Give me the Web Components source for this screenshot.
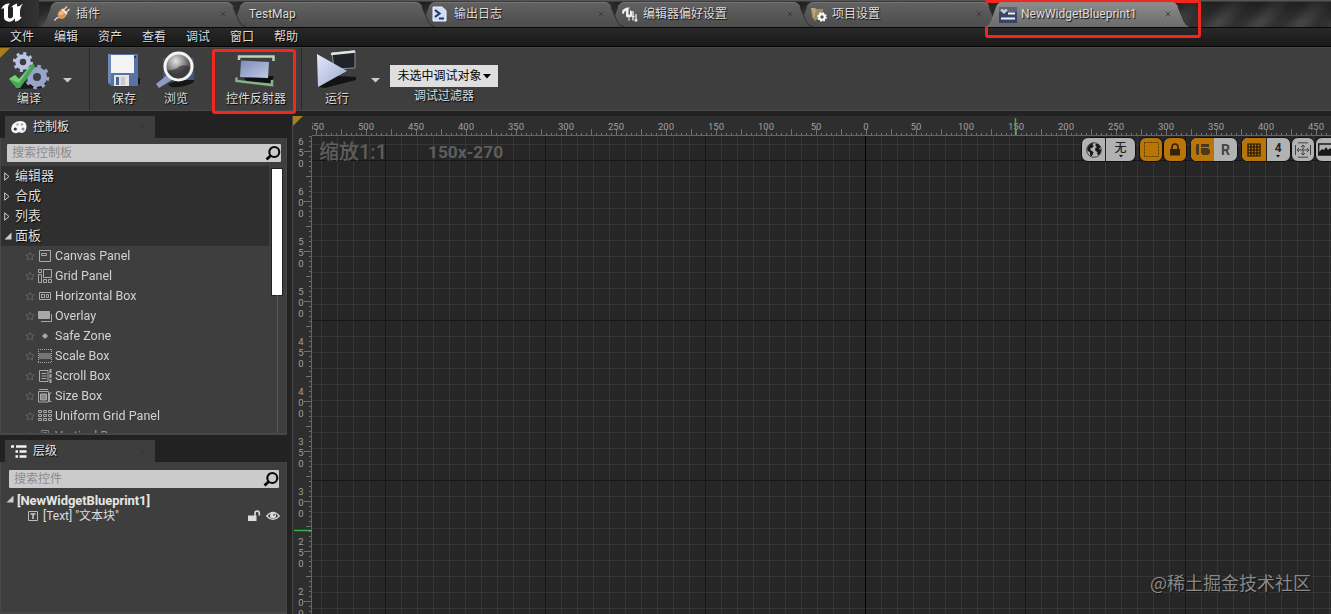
<!DOCTYPE html>
<html lang="zh">
<head>
<meta charset="utf-8">
<title>NewWidgetBlueprint1</title>
<style>
  body {
    margin: 0;
    width: 1331px;
    height: 614px;
    overflow: hidden;
    background: #222;
    color: #dcdcdc;
    font: 12px/16px Roboto, "Noto Sans CJK SC", sans-serif;
  }
</style>
</head>
<body>
<editor-window></editor-window>

<script>
const ICONS = {
  logo: `<svg width="24" height="23" viewBox="0 0 24 22"><path d="M1 9C3 4 6 3 10 3C8 5 8 6 8 9V16Q8 18 10 18Q12 18 13 16V7Q12 6 11 7Q13 4 17 3V6Q20 6 23 3Q20 7 20 10V15Q20 18 22 16C20 20 17 21 15 21V18C13 20 11 22 8 21C4 20 4 18 4 15V8Q3 7 1 9Z" fill="#fff"/></svg>`,
  plug: `<svg width="16" height="16" viewBox="0 0 16 16"><path d="M.5 14.500Q3 11 5 11.500" stroke="#ddd" stroke-width="1.300" fill="none"/><path d="M3.500 8Q4 5 7 3.500L12.500 9Q11 12.500 8 13Q4 13 3.500 8Z" fill="#dc9653"/><path d="M5 8Q5 6 8 5L10 7Q7 11 5 8Z" fill="#f0be8a"/><path d="M7 3.500L9 2.500L13.500 7L12.500 9Z" fill="#fbecd9"/><path d="M10 3.500L13 .5M12.500 6L15.500 3" stroke="#e2c8ae" stroke-width="1.600"/></svg>`,
  log: `<svg width="15" height="16" viewBox="0 0 15 16"><path d="M1 1H10L14 4.500V15H1Z" fill="#cfdcf5" stroke="#eef4ff"/><path d="M3 4L7.500 7.500L3 11" fill="none" stroke="#26366b" stroke-width="2.200"/><path d="M7 12.500H12" stroke="#26366b" stroke-width="2"/></svg>`,
  prefs: `<svg width="17" height="17" viewBox="0 0 17 17"><path d="M1 6Q2 1 9 1.500Q7 2.500 7.500 5V8.500Q8.500 9 9 8V4L11 5.500V10Q8 13 5 10.500V5Q3 5 3 8Q1 8 1 6Z" fill="#eee"/><path d="M12 5V14.500M15 8V16M8 12.500V14.500" stroke="#eee" stroke-width="1.300"/><path d="M10.500 10.500H13.500M13.500 14H16.500" stroke="#eee" stroke-width="1.700"/></svg>`,
  project: `<svg width="17" height="17" viewBox="0 0 17 17"><path d="M1 2H5L6 3H13V7L5 15L2 11Z" fill="#a08a66"/><path d="M1 2H5L6 4L4 12Z" fill="#bba681"/><circle cx="12" cy="11" r="2.700" fill="none" stroke="#fff" stroke-width="2"/><circle cx="12" cy="11" r="4" fill="none" stroke="#fff" stroke-width="1.600" stroke-dasharray="1.700 1.440"/></svg>`,
  widget: `<svg width="18" height="17" viewBox="0 0 18 17"><path d="M0 1H18V17H0Z" fill="#36436b"/><path d="M0 1H18V6H0Z" fill="#5c6374"/><path d="M5 8L1.500 4.500Q2 2 5 4Q8 2 8.500 4.500Z" fill="#ccc"/><path d="M9 7.500H16M2 12.500H16" stroke="#f2f2f2" stroke-width="2.200"/></svg>`,
  compile: `<svg width="42" height="40" viewBox="0 0 42 40"><path d="M5 36L13 31L38 33L34 38L12 39Z" fill="#191919"/><g fill="none" stroke="#b9c5e3"><circle cx="15" cy="12" r="5.500" stroke-width="4.500"/><circle cx="15" cy="12" r="8.600" stroke-width="3" stroke-dasharray="3 3.750"/><circle cx="29" cy="27" r="7" stroke="#98a5c9" stroke-width="6"/><circle cx="29" cy="27" r="10.800" stroke="#98a5c9" stroke-width="3" stroke-dasharray="3.600 4.880"/></g><path d="M1 29L7 25L11 29L25 13L27 17L12 38H8Z" fill="#48a457"/><path d="M1 29L7 25L11 29L25 13L11 33Z" fill="#72d07d"/></svg>`,
  save: `<svg width="36" height="38" viewBox="0 0 36 38"><path d="M4 33L34 27V33Q27 36 18 35Z" fill="#171717"/><path d="M2 3H32V35H5L2 32Z" fill="#5673a6"/><path d="M2 3H5V32H2Z" fill="#7189b5"/><path d="M5 4H28V22H5Z" fill="#f3f3f3"/><path d="M8 24H23V35H8Z" fill="#e4e4e4"/><path d="M10 26H13V34H10Z" fill="#4a6596"/><path d="M15 26H19V34H15Z" fill="#c8c8c8"/><path d="M28 5H30V7H28Z" fill="#26385c"/></svg>`,
  browse: `<svg width="42" height="40" viewBox="0 0 42 40"><defs><radialGradient id="g" cx=".4" cy=".3"><stop offset="0" stop-color="#e4e4e4"/><stop offset=".65" stop-color="#8a8a8a"/><stop offset="1" stop-color="#555"/></radialGradient></defs><path d="M13 34L39 26V32Q30 38 16 37Z" fill="#151515"/><path d="M8 8H39V30H8Z" fill="#42567c"/><path d="M12 25L1 34L4 38L17 30Z" fill="#8e9bc4"/><circle cx="23.500" cy="16.500" r="13.500" fill="url(#g)" stroke="#f4f4f4" stroke-width="3"/><path d="M12 20Q20 21 25 16Q30 14 35 17Q33 28 23 28.500Q14 27 12 20Z" fill="#2c2c2c" opacity=".6"/></svg>`,
  reflector: `<svg width="42" height="38" viewBox="0 0 42 38"><defs><linearGradient id="g" x2="1" y2="1"><stop stop-color="#7d8cb8"/><stop offset="1" stop-color="#bfcbe8"/></linearGradient></defs><path d="M9 27L39 25L36 32L12 31Z" fill="#101010"/><path d="M6 9.500L34 11L33 27L5 26Z" fill="url(#g)"/><path d="M4 9V5.500H38.500V10" fill="none" stroke="#b9d6b6" stroke-width="2.500"/><path d="M1.500 26.500V30L37 34V29" fill="none" stroke="#86b384" stroke-width="2.500"/></svg>`,
  play: `<svg width="44" height="42" viewBox="0 0 44 42"><defs><linearGradient id="g" x2="1" y2="1"><stop stop-color="#e4eafa"/><stop offset="1" stop-color="#9aa8cf"/></linearGradient></defs><path d="M4 38L22 27L41 28V31L10 39Z" fill="#131313"/><path d="M17 4L40 2V19L19 20Z" fill="#202329" stroke="#8b919b"/><path d="M16 5L40 2.500" stroke="#dfe8e2" stroke-width="2.500"/><path d="M2 5L32 22L3 38Z" fill="url(#g)"/></svg>`,
  caret: `<svg width="9" height="6" viewBox="0 0 9 6"><path d="M0 1H9L4.500 5.500Z" fill="#ccc"/></svg>`,
  palette: `<svg width="16" height="15" viewBox="0 0 16 15"><path d="M9 1Q15 1 15.500 6Q15.500 12 11 13Q8 12 7 12.500Q4 14.500 1 11.500Q-1 8 2 4Q5 1 9 1Z" fill="#f6f6f6"/><circle cx="4.300" cy="9" r="1.600" fill="#333"/><circle cx="6.500" cy="4.500" r="1.200" fill="#a5b0a0"/><circle cx="11" cy="4.500" r="1.200" fill="#9aabc0"/><circle cx="12" cy="9" r="1.500" fill="#7d94b8"/></svg>`,
  tree: `<svg width="16" height="13" viewBox="0 0 16 13"><path d="M0 1.500H3M5 1.500H15.500M8.500 6.500H15.500M8.500 11.500H15.500M4.500 6.500H7M4.500 11.500H7" stroke="#f2f2f2" stroke-width="2.500"/></svg>`,
  search: `<svg width="16" height="16" viewBox="0 0 16 16"><circle cx="9.300" cy="7" r="5" fill="none" stroke="#080808" stroke-width="2.100"/><path d="M5.800 10.500L1.500 14.500" stroke="#080808" stroke-width="2.800"/></svg>`,
  star: `<svg width="10" height="10" viewBox="0 0 10 10"><path d="M5 1L6.200 3.800L9.300 4L7 6L7.700 9L5 7.500L2.300 9L3 6L.7 4L3.800 3.800Z" fill="none" stroke="#646464" stroke-width=".9"/></svg>`,
  canvas: `<svg width="14" height="14" viewBox="0 0 14 14"><path d="M1.500 1.500H12.500V12.500H1.500ZM3.500 4.500H8.500V6.500H3.500Z"/></svg>`,
  grid: `<svg width="14" height="14" viewBox="0 0 14 14"><path d="M.5.500H3.500V3.500H.5ZM5.500.500H13.500V8.500H5.500ZM.5 5.500H3.500V13.500H.5ZM5.500 10.500H8.500V13.500H5.500ZM10.500 10.500H13.500V13.500H10.500Z"/></svg>`,
  hbox: `<svg width="14" height="14" viewBox="0 0 14 14"><path d="M1.500 3.500H12.500V10.500H1.500ZM3.500 5.500H6.500V8.500H3.500ZM8.500 5.500H10.500V8.500H8.500Z"/></svg>`,
  overlay: `<svg width="14" height="14" viewBox="0 0 14 14"><path d="M.5 2.500H11.500V9.500H.5Z" fill="#a8a8a8"/><path d="M13.500 5V12.500H3"/></svg>`,
  safe: `<svg width="14" height="14" viewBox="0 0 14 14"><path d="M7 4.500L9.500 7L7 9.500L4.500 7Z" fill="#aaa"/></svg>`,
  scale: `<svg width="14" height="14" viewBox="0 0 14 14"><path d="M0 .5H14M0 13.500H14M.5 0V14M13.500 0V14" stroke-dasharray="1 1"/><path d="M1 4H13V10H1Z" fill="#757575" stroke="none"/></svg>`,
  scroll: `<svg width="14" height="14" viewBox="0 0 14 14"><path d="M1.500 1.500H10V12.500H1.500ZM3.500 4.500H8.500M3.500 7H8.500M3.500 9.500H8.500"/><path d="M12.500 0V4M12.500 5V9M12.500 10V14" stroke-width="2"/></svg>`,
  size: `<svg width="14" height="14" viewBox="0 0 14 14"><path d="M1 .5H10M.5 2.500H10.500V13H.5ZM13.500 4H11.500V12.500H13.500"/><path d="M2.500 5H8.500V11H2.500Z" fill="#888"/></svg>`,
  uniform: `<svg width="14" height="14" viewBox="0 0 14 14"><path d="M.5 1.500H3.500V3.500H.5ZM5.500 1.500H8.500V3.500H5.500ZM10.500 1.500H13.500V3.500H10.500ZM.5 5.500H3.500V7.500H.5ZM5.500 5.500H8.500V7.500H5.500ZM10.500 5.500H13.500V7.500H10.500ZM.5 9.500H3.500V11.500H.5ZM5.500 9.500H8.500V11.500H5.500ZM10.500 9.500H13.500V11.500H10.500Z"/></svg>`,
  vbox: `<svg width="14" height="14" viewBox="0 0 14 14"><path d="M3.500 1.500H10.500V13.500H3.500ZM5.500 3.500H8.500V6.500H5.500Z"/></svg>`,
  text: `<svg width="10" height="10" viewBox="0 0 10 10"><path d="M.5.500H9.500V9.500H.5Z" fill="none" stroke="#bbb"/><path d="M2.500 3H7.500M5 3V8" fill="none" stroke="#ccc" stroke-width="1.500"/></svg>`,
  closed: `<svg width="6" height="9" viewBox="0 0 6 9"><path d="M.7.800V8.200L5 4.500Z" fill="none" stroke="#ccc"/></svg>`,
  open: `<svg width="8" height="8" viewBox="0 0 8 8"><path d="M7.500.500V7.500H.5Z" fill="#ccc"/></svg>`,
  unlock: `<svg width="13" height="12" viewBox="0 0 13 12"><path d="M0 5.500H8.500V11H0Z" fill="#ddd"/><path d="M7 6V3.500Q7 1 9.200 1Q11.300 1 11.300 3.500V5.500" fill="none" stroke="#ddd" stroke-width="1.600"/></svg>`,
  eye: `<svg width="14" height="10" viewBox="0 0 14 10"><path d="M.7 5Q7-2.500 13.300 5Q7 12 .7 5Z" fill="none" stroke="#ddd" stroke-width="1.200"/><circle cx="7" cy="4.600" r="3" fill="#ddd"/><circle cx="8" cy="3.700" r="1" fill="#666"/></svg>`,
  globe: `<svg width="16" height="16" viewBox="0 0 16 16"><circle cx="8" cy="8" r="7.300" fill="#b4b4b4" stroke="#333" stroke-width=".9"/><path d="M1 7L2.500 4L5 1.500L7.500 1L6.500 3L8 4L6 6L4 6.500L5 8.500L7.500 10L7 12L5.500 14.500L4 13L4 10.500L2 9ZM9.500 2L12 2L14.500 5L13 6.500L15 8L14.500 11L12.500 13L11 12L11.500 10L9.500 9L9 6.500L11 5L9.500 4Z" fill="#191919"/></svg>`,
  dashed: `<svg width="17" height="16" viewBox="0 0 17 16"><path d="M1.500.500H15.500V14.500H1.500Z" fill="none" stroke="#5f3f06" stroke-dasharray="2 1"/></svg>`,
  lock: `<svg width="12" height="14" viewBox="0 0 12 14"><path d="M1 6H11V12.500H1Z" fill="#342309"/><path d="M3 6V4Q3 1 6 1Q9 1 9 4V6" fill="none" stroke="#342309" stroke-width="1.600"/></svg>`,
  layout: `<svg width="16" height="14" viewBox="0 0 16 14"><path d="M1 2L2 1H4V12H2L1 10ZM6 1H14V4H6ZM6 5H13L15 7V10L13 12H8L6 10Z" fill="#4a391c"/></svg>`,
  snap: `<svg width="14" height="14" viewBox="0 0 14 14"><path d="M1 1H13V13H1ZM4 1V13M7 1V13M10 1V13M1 4H13M1 7H13M1 10H13" fill="none" stroke="#181000" stroke-width="1.200"/></svg>`,
  fit: `<svg width="18" height="16" viewBox="0 0 18 16"><path d="M1.500 3V13M16.500 3V13M4 .8H14M4 15.200H14M3 8H15M9 3V13M5 6L3 8L5 10M13 6L15 8L13 10M7 5L9 3L11 5M7 11L9 13L11 11" fill="none" stroke="#444"/></svg>`,
  image: `<svg width="16" height="14" viewBox="0 0 16 14"><path d="M.7 1H15.300V12H.7Z" fill="none" stroke="#181818" stroke-width="1.300"/><path d="M1 11V9L4 6L6 7L8 4L10 7L12 5L15 9V12H1Z" fill="#181818"/></svg>`
};

const X = `<svg width="6" height="6" viewBox="0 0 6 6"><path d="M.5.500L5.500 5.500M5.500.500L.5 5.500" stroke="#353535" stroke-opacity=".8"/></svg>`;

class BaseElement extends HTMLElement {
  constructor() {
    super();
    this.attachShadow({ mode: 'open' });
  }
  connectedCallback() {
    const template = document.createElement('template');
    template.innerHTML = `<style>${this.getStyles()}</style>${this.getTemplate()}`;
    this.shadowRoot.replaceChildren(template.content.cloneNode(true));
  }
  icon() {
    return ICONS[this.getAttribute('icon')] || '';
  }
}

class UiIcon extends BaseElement {
  getStyles() {
    return `:host { display: inline-flex; flex: none; } svg { display: block; }`;
  }
  getTemplate() {
    return ICONS[this.getAttribute('name')] || '';
  }
}

class WindowTab extends BaseElement {
  getStyles() {
    return `
      :host {
        display: grid;
        flex: none;
        width: 207px;
        height: 27px;
        margin-right: -18px;
      }
      .shape, .content { grid-area: 1 / 1; }
      .content {
        display: flex;
        align-items: center;
        padding: 1px 20px 0 15px;
        text-shadow: 1px 1px 1px #111;
        white-space: nowrap;
      }
      .icon { display: flex; width: 22px; }
      :host(:not([icon])) .icon { width: 6px; }
      .label { flex: 1; }
    `;
  }
  getTemplate() {
    const top = this.hasAttribute('active') ? '#8d8d8d' : '#626262';
    const bottom = this.hasAttribute('active') ? '#6b6b6b' : '#4c4c4c';
    const close = this.hasAttribute('closable') ? X : '';
    return `
      <svg class="shape" width="207" height="27">
        <defs><linearGradient id="t" x2="0" y2="1"><stop stop-color="${top}"/><stop offset="1" stop-color="${bottom}"/></linearGradient></defs>
        <path d="M0 27Q5 26 7 21L12 7Q14 2 19 2H187Q192 2 194 7L200 21Q202 26 207 27Z" fill="url(#t)"/>
        <path d="M12 7Q14 2.500 19 2.500H187Q192 2.500 194 7" fill="none" stroke="#858585" stroke-opacity=".5"/>
        <path d="M194 7L200 21Q202 26 207 27" fill="none" stroke="#2f2f2f"/>
      </svg>
      <div class="content">
        <span class="icon">${this.icon()}</span>
        <span class="label"><slot></slot></span>${close}
      </div>`;
  }
}

class MenuBar extends BaseElement {
  getStyles() {
    return `
      :host {
        display: flex;
        height: 18px;
        border-top: 1px solid #080808;
        border-bottom: 1px solid #050505;
        background: linear-gradient(#282828, #191919);
        line-height: 19px;
      }
      ::slotted(span) { width: 44px; text-align: center; text-shadow: 1px 1px #000; }
    `;
  }
  getTemplate() {
    return `<slot></slot>`;
  }
}

class ToolButton extends BaseElement {
  getStyles() {
    return `
      :host {
        display: flex;
        flex-direction: column;
        align-items: center;
        flex: none;
        height: 61px;
      }
      .icon { height: 42px; display: flex; align-items: center; }
      .label { line-height: 16px; white-space: nowrap; text-shadow: 1px 1px 1px #000; }
    `;
  }
  getTemplate() {
    return `<div class="icon">${this.icon()}</div><div class="label"><slot></slot></div>`;
  }
}

class SearchBox extends BaseElement {
  getStyles() {
    return `
      :host {
        display: flex;
        align-items: center;
        justify-content: space-between;
        box-sizing: border-box;
        height: 18px;
        padding: 0 0 0 5px;
        background: #cbcbcb;
        border-radius: 1px;
        color: #8b8b8b;
      }
      svg { display: block; }
    `;
  }
  getTemplate() {
    return `<slot></slot>${ICONS.search}`;
  }
}

class DockPanel extends BaseElement {
  getStyles() {
    return `
      :host { display: flex; flex-direction: column; box-sizing: border-box; width: 287px; }
      header {
        display: flex;
        align-items: center;
        box-sizing: border-box;
        width: 150px;
        height: 22px;
        margin-left: 5px;
        padding: 0 10px 0 6px;
        background: #3e3e3e;
        color: #e4e4e4;
      }
      .icon { display: flex; width: 22px; }
      .label { flex: 1; text-shadow: 1px 1px 1px #000; }
      .body {
        flex: 1;
        min-height: 0;
        overflow: hidden;
        box-sizing: border-box;
        background: #3e3e3e;
        border: solid #474747;
        border-width: 0 1px 2px 1px;
      }
    `;
  }
  getTemplate() {
    return `
      <header><span class="icon">${this.icon()}</span><span class="label">${this.getAttribute('label')}</span>${X}</header>
      <div class="body"><slot></slot></div>`;
  }
}

class PaletteCategory extends BaseElement {
  getStyles() {
    return `
      :host { display: block; }
      .head {
        display: flex;
        align-items: center;
        height: 20px;
        padding-left: 3px;
        background: #2f2f2f;
        font-size: 13px;
        text-shadow: 1px 1px 1px #000;
      }
      .arrow { display: flex; width: 11px; }
    `;
  }
  getTemplate() {
    const arrow = this.hasAttribute('open') ? ICONS.open : ICONS.closed;
    return `
      <div class="head"><span class="arrow">${arrow}</span>${this.getAttribute('label')}</div>
      <slot></slot>`;
  }
}

class PaletteItem extends BaseElement {
  getStyles() {
    return `
      :host { display: flex; align-items: center; height: 20px; padding-left: 24px; font-size: 12.5px; color: #d2d2d2; }
      .icon { display: flex; width: 17px; margin-left: 3px; fill: none; stroke: #a9a9a9; }
      svg { display: block; }
      .label { white-space: nowrap; }
    `;
  }
  getTemplate() {
    return `${ICONS.star}<span class="icon">${this.icon()}</span><span class="label"><slot></slot></span>`;
  }
}

class PaletteList extends BaseElement {
  getStyles() {
    return `
      :host { display: flex; height: 268px; margin-top: 3px; overflow: hidden; }
      .items { width: 268px; height: 267px; padding-top: 1px; overflow: hidden; -webkit-mask-image: linear-gradient(#000 257px, #0008 268px); }
      .bar { width: 10px; margin-left: 3px; padding-top: 4px; display: flex; flex-direction: column; align-items: center; }
      .thumb { width: 10px; height: 126px; flex: none; background: #fff; outline: 1px solid #222; }
      .track { width: 1px; flex: 1; background: #585858; }
    `;
  }
  getTemplate() {
    return `
      <div class="items"><slot></slot></div>
      <div class="bar"><div class="thumb"></div><div class="track"></div></div>`;
  }
}

class HierarchyTree extends BaseElement {
  getStyles() {
    return `
      :host { display: block; margin-top: 5px; }
      div { display: flex; align-items: center; height: 16px; white-space: nowrap; }
      .root { height: 15px; padding-left: 5px; font-size: 13px; font-weight: bold; letter-spacing: -.08px; color: #e6e6e6; gap: 3px; }
      .root svg { margin-top: -3px; }
      .child { padding: 0 6px 0 27px; gap: 5px; }
      .name { flex: 1; }
    `;
  }
  getTemplate() {
    return `
      <div class="root">${ICONS.open}<span>[NewWidgetBlueprint1]</span></div>
      <div class="child">${ICONS.text}<span class="name">[Text] "文本块"</span>${ICONS.unlock}${ICONS.eye}</div>`;
  }
}

class RulerBar extends BaseElement {
  getStyles() {
    return `
      :host { display: grid; overflow: hidden; background: #2e2e2e; color: #a0a0a0; font-size: 9.5px; line-height: 11px; }
      svg, .labels { grid-area: 1 / 1; }
      .labels { display: flex; }
      .labels span { flex: none; width: 50px; text-align: center; }
      :host(:not([vertical])) .labels { margin-left: -21px; padding-top: 5px; }
      :host([vertical]) .labels { flex-direction: column; align-items: flex-start; margin-top: -9px; padding-left: 5px; }
      :host([vertical]) span { display: flex; flex-direction: column; justify-content: center; width: 6px; height: 50px; }
      b { font-weight: normal; }
    `;
  }
  getTemplate() {
    const vertical = this.hasAttribute('vertical');
    const origin = vertical ? 801 - 136 : 866 - 312;
    const length = vertical ? 478 : 1019;
    let d = '';
    for (let v = -1000; v <= 1000; v += 5) {
      const p = origin + v + .5;
      if (p < 0 || p > length) continue;
      const size = v % 50 === 0 ? (vertical ? 7 : 6) : v % 25 === 0 ? (vertical ? 5 : 6) : 2;
      d += vertical ? `M${18 - size} ${p}H18` : `M${p} ${19 - size}V19`;
    }
    const labels = [];
    const last = vertical ? 200 : -450;
    for (let v = vertical ? 650 : 550; v >= last; v -= 50) {
      const text = String(Math.abs(v));
      labels.push(`<span>${vertical ? [...text].map(c => `<b>${c}</b>`).join('') : text}</span>`);
    }
    const marker = vertical ? 'M1 394.500H19' : 'M703.500 2V19';
    const edge = vertical ? 'M18.500 0V478' : 'M0 19.500H1019';
    const w = vertical ? 19 : 1019;
    const h = vertical ? 478 : 20;
    return `
      <svg width="${w}" height="${h}"><path d="${d}" stroke="#707070"/><path d="${edge}" stroke="#646464"/></svg>
      <div class="labels">${labels.join('')}</div>
      <svg width="${w}" height="${h}"><path d="${marker}" stroke="#3cb64b" stroke-width="1.400"/></svg>`;
  }
}

class ViewButton extends BaseElement {
  getStyles() {
    return `
      :host {
        display: flex;
        flex: none;
        height: 23px;
        background: #b2b2b2;
        border: 1px solid #111;
        border-radius: 7px;
        overflow: hidden;
        color: #222;
      }
      :host([on]) { background: #ba7508; }
      ::slotted(span) { display: flex; flex-direction: column; align-items: center; justify-content: center; flex: 1; font-weight: bold; }
      ::slotted(span.on) { background: #ba7508; }
      ::slotted(span.line) { border-left: 1px solid #222; }
    `;
  }
  getTemplate() {
    return `<slot></slot>`;
  }
}

class WidgetDesigner extends BaseElement {
  getStyles() {
    return `
      :host {
        display: grid;
        grid-template: 20px 1fr / 19px 1fr;
        flex: 1;
        min-width: 0;
        overflow: hidden;
        border-left: 1px solid #484848;
        box-sizing: border-box;
        background: #2e2e2e;
      }
      .corner { background: linear-gradient(135deg, #a87f1c 6.5px, #2e2e2e 7.5px); }
      .surface {
        position: relative;
        overflow: hidden;
        background: #262626;
        display: flex;
        justify-content: space-between;
        align-items: flex-start;
      }
      .surface > svg { position: absolute; inset: 0; }
      .info {
        position: relative;
        display: flex;
        gap: 41px;
        padding: 3px 0 0 7px;
        font-size: 17.3px;
        line-height: 26px;
        font-weight: bold;
        color: #5e5e5e;
      }
      .info .zoom { font-size: 20px; font-weight: 500; }
      .tools { position: relative; display: flex; margin-right: -13px; padding-top: 1px; }
      small { font-size: 12px; line-height: 14px; }
      .thin { font-weight: 500; }
      .r { font-size: 14px; color: #444; }
      .mark {
        position: absolute;
        right: 20px;
        bottom: 18px;
        color: #898989;
        font: 18px/27px "Noto Sans CJK SC", sans-serif;
        text-shadow: 1px 1px 1px #111;
      }
    `;
  }
  getTemplate() {
    let minor = '', major = '';
    for (let x = 9; x < 1019; x += 16) {
      if ((x - 553) % 160 === 0) major += `M${x + .5} 0V478`;
      else minor += `M${x + .5} 0V478`;
    }
    for (let y = 8; y < 478; y += 16) {
      if ((y - 24) % 160 === 0) major += `M0 ${y + .5}H1019`;
      else minor += `M0 ${y + .5}H1019`;
    }
    const drop = `<svg width="4" height="3"><path d="M0 0H4L2 2.500Z" fill="#111"/></svg>`;
    return `
      <div class="corner"></div>
      <ruler-bar></ruler-bar>
      <ruler-bar vertical></ruler-bar>
      <div class="surface">
        <svg width="1019" height="478"><path d="${minor}" stroke="#363636"/><path d="${major}" stroke="#161616"/><path d="M553.500 0V478" stroke="#050505"/></svg>
        <div class="info"><span class="zoom">缩放1:1</span><span>150x-270</span></div>
        <div class="tools">
          <view-button style="width:53px;margin-right:3px"><span><ui-icon name="globe"></ui-icon></span><span class="line" style="flex:1.25"><small class="thin">无</small>${drop}</span></view-button>
          <view-button on style="width:22px"><span><ui-icon name="dashed"></ui-icon></span></view-button>
          <view-button on style="width:22px;margin-right:3px"><span><ui-icon name="lock"></ui-icon></span></view-button>
          <view-button style="width:46px;margin-right:3px"><span class="on"><ui-icon name="layout"></ui-icon></span><span class="r">R</span></view-button>
          <view-button style="width:48px"><span class="on"><ui-icon name="snap"></ui-icon></span><span class="line"><small>4</small>${drop}</span></view-button>
          <view-button style="width:22px;margin-right:0"><span><ui-icon name="fit"></ui-icon></span></view-button>
          <view-button style="width:27px"><span style="align-items:flex-start;padding-left:2px"><ui-icon name="image"></ui-icon></span></view-button>
        </div>
        <div class="mark">@稀土掘金技术社区</div>
      </div>`;
  }
}

class EditorWindow extends BaseElement {
  getStyles() {
    return `
      :host { display: flex; flex-direction: column; width: 1331px; height: 614px; position: relative; }
      .titlebar {
        display: flex;
        height: 27px;
        background:
          linear-gradient(#555 1px, #1118 2px, #0000 80%),
          repeating-linear-gradient(130deg, #303030 0 8px, #444 18px 22px, #303030 32px);
      }
      .logo { width: 39px; flex: none; background: linear-gradient(90deg, #1c1c1c, #343434); }
      .toolbar {
        display: flex;
        box-sizing: border-box;
        height: 64px;
        background: #3e3e3e;
        border-top: 1px solid #464646;
        border-bottom: 1px solid #484848;
      }
      .group { display: flex; box-sizing: border-box; align-items: flex-start; padding-top: 1px; }
      .compile { width: 90px; border-right: 1px solid #2a2a2a; background: linear-gradient(135deg, #a87f1c 6.5px, transparent 7.5px); }
      .files { width: 212px; border-right: 1px solid #2a2a2a; }
      .caret { padding-top: 22px; }
      .filter { width: 108px; margin-left: 10px; padding-top: 17px; text-align: center; }
      .combo {
        display: flex;
        align-items: center;
        justify-content: center;
        gap: 1px;
        height: 22px;
        background: #dfdfdf;
        color: #050505;
        margin-bottom: 1px;
      }
      .filter label { text-shadow: 1px 1px 1px #000; }
      main { display: flex; flex: 1; gap: 5px; margin-top: 5px; min-height: 0; }
      aside { display: flex; flex-direction: column; gap: 5px; }
      .palette { height: 319px; }
      .hierarchy { flex: 1; }
      .note { position: absolute; box-sizing: border-box; border: 3px solid #f3271d; border-radius: 3px; }
    `;
  }
  getTemplate() {
    return `
      <div class="titlebar">
        <div class="logo">${ICONS.logo}</div>
        <window-tab icon="plug" closable style="z-index:6">插件</window-tab>
        <window-tab style="z-index:5">TestMap</window-tab>
        <window-tab icon="log" closable style="z-index:4">输出日志</window-tab>
        <window-tab icon="prefs" closable style="z-index:3">编辑器偏好设置</window-tab>
        <window-tab icon="project" closable style="z-index:2">项目设置</window-tab>
        <window-tab icon="widget" closable active style="z-index:7">NewWidgetBlueprint1</window-tab>
      </div>
      <menu-bar><span>文件</span><span>编辑</span><span>资产</span><span>查看</span><span>调试</span><span>窗口</span><span>帮助</span></menu-bar>
      <div class="toolbar">
        <div class="group compile">
          <tool-button icon="compile" style="width:58px">编译</tool-button>
          <span class="caret" style="margin-left:5px">${ICONS.caret}</span>
        </div>
        <div class="group files">
          <tool-button icon="save" style="width:52px;margin-left:8px">保存</tool-button>
          <tool-button icon="browse" style="width:52px">浏览</tool-button>
          <tool-button icon="reflector" style="width:80px;margin-left:14px">控件反射器</tool-button>
        </div>
        <div class="group">
          <tool-button icon="play" style="width:60px;margin-left:5px">运行</tool-button>
          <span class="caret" style="margin-left:4px">${ICONS.caret}</span>
        </div>
        <div class="filter">
          <div class="combo">未选中调试对象<svg width="8" height="5"><path d="M0 0H8L4 4.500Z"/></svg></div>
          <label>调试过滤器</label>
        </div>
      </div>
      <main>
        <aside>
          <dock-panel class="palette" icon="palette" label="控制板">
            <search-box style="margin:6px 5px 0 6px">搜索控制板</search-box>
            <palette-list>
              <palette-category label="编辑器"></palette-category>
              <palette-category label="合成"></palette-category>
              <palette-category label="列表"></palette-category>
              <palette-category label="面板" open>
                <palette-item icon="canvas">Canvas Panel</palette-item>
                <palette-item icon="grid">Grid Panel</palette-item>
                <palette-item icon="hbox">Horizontal Box</palette-item>
                <palette-item icon="overlay">Overlay</palette-item>
                <palette-item icon="safe">Safe Zone</palette-item>
                <palette-item icon="scale">Scale Box</palette-item>
                <palette-item icon="scroll">Scroll Box</palette-item>
                <palette-item icon="size">Size Box</palette-item>
                <palette-item icon="uniform">Uniform Grid Panel</palette-item>
                <palette-item icon="vbox">Vertical Box</palette-item>
              </palette-category>
            </palette-list>
          </dock-panel>
          <dock-panel class="hierarchy" icon="tree" label="层级">
            <search-box style="margin:8px 7px 0 8px">搜索控件</search-box>
            <hierarchy-tree></hierarchy-tree>
          </dock-panel>
        </aside>
        <widget-designer></widget-designer>
      </main>
      <div class="note" style="left:212px;top:49px;width:84px;height:65px"></div>
      <div class="note" style="left:985px;top:0;width:216px;height:38px"></div>`;
  }
}

customElements.define('ui-icon', UiIcon);
customElements.define('window-tab', WindowTab);
customElements.define('menu-bar', MenuBar);
customElements.define('tool-button', ToolButton);
customElements.define('search-box', SearchBox);
customElements.define('dock-panel', DockPanel);
customElements.define('palette-category', PaletteCategory);
customElements.define('palette-item', PaletteItem);
customElements.define('palette-list', PaletteList);
customElements.define('hierarchy-tree', HierarchyTree);
customElements.define('ruler-bar', RulerBar);
customElements.define('view-button', ViewButton);
customElements.define('widget-designer', WidgetDesigner);
customElements.define('editor-window', EditorWindow);
</script>
</body>
</html>
